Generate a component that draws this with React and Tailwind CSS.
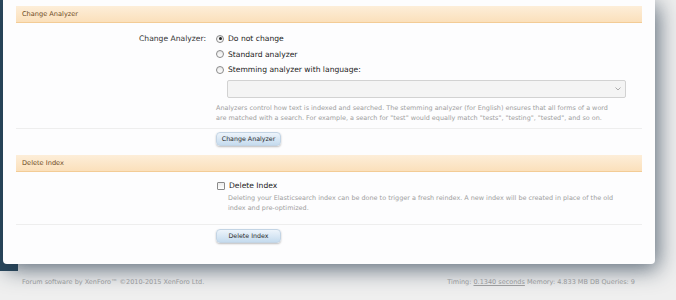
import React from "react";

function Radio({ checked }) {
  return (
    <span className="relative inline-block w-[8px] h-[8px] rounded-full border border-[#8a8a8a] bg-gradient-to-b from-[#e8e8e8] to-white shrink-0">
      {checked && (
        <span className="absolute left-[1.5px] top-[1.5px] w-[3px] h-[3px] rounded-full bg-[#222]" />
      )}
    </span>
  );
}

function Button({ children }) {
  return (
    <div className="w-[65px] h-[14px] rounded-[4px] border border-[#c3d4e4] bg-gradient-to-b from-[#edf4fb] to-[#c5dbee] shadow-[0_1px_2px_rgba(0,0,0,0.25)] flex items-center justify-center text-[6.3px] text-[#2a2a2a]">
      {children}
    </div>
  );
}

function Header({ children }) {
  return (
    <div className="h-[17px] bg-gradient-to-b from-[#fdeed9] to-[#fbe0bb] border-b border-[#f3cc96] flex items-center px-[6px] pt-[2px] text-[6.6px] text-[#6d4a1e]">
      {children}
    </div>
  );
}

export default function App() {
  return (
    <div
      className="relative w-[676px] h-[300px] overflow-hidden bg-[#efefef]"
      style={{ fontFamily: '"DejaVu Sans", Verdana, sans-serif' }}
    >
      <div className="absolute left-0 top-0 w-[18px] h-[271px] bg-[#2b495e]" />
      <div className="relative ml-[3px] w-[652px] h-[264px] bg-[#fdfdfe] rounded-b-[4px] shadow-[3px_5px_22px_rgba(30,50,70,0.7)] pt-[6px] px-[13px]">
        <Header>Change Analyzer</Header>
        <div className="flex pt-[11px]">
          <div className="w-[190px] text-right text-[7.6px] text-[#333] leading-[9px]">Change Analyzer:</div>
          <div className="ml-[10px] flex-1 pr-[16px]">
            <div className="flex flex-col gap-[6.5px] text-[7.6px] text-[#222] leading-[9px]">
              <div className="flex items-center gap-[4px]"><Radio checked /> Do not change</div>
              <div className="flex items-center gap-[4px]"><Radio /> Standard analyzer</div>
              <div className="flex items-center gap-[4px]"><Radio /> Stemming analyzer with language:</div>
            </div>
            <div className="ml-[11px] mt-[6px] h-[18px] border border-[#d2d2d2] rounded-[2px] bg-[#f4f4f4] flex items-center justify-end pr-[4px]">
              <svg width="6" height="4" viewBox="0 0 6 4" className="text-[#999]">
                <path d="M0.5 0.5 L3 3 L5.5 0.5" fill="none" stroke="currentColor" strokeWidth="0.8" />
              </svg>
            </div>
            <div className="mt-[5px] text-[6.45px] leading-[10px] text-[#a0a0a0] whitespace-nowrap">
              Analyzers control how text is indexed and searched. The stemming analyzer (for English) ensures that all forms of a word
              <br />
              are matched with a search. For example, a search for "test" would equally match "tests", "testing", "tested", and so on.
            </div>
          </div>
        </div>
        <div className="mt-[5px] border-t border-[#eeeeee] pt-[3px] pl-[200px]">
          <Button>Change Analyzer</Button>
        </div>
        <div className="mt-[9px]">
          <Header>Delete Index</Header>
        </div>
        <div className="pl-[201px] pt-[9px]">
          <div className="flex items-center gap-[4px] text-[7.6px] text-[#222] leading-[10px]">
            <span className="inline-block w-[8px] h-[8px] border border-[#8a8a8a] rounded-[1px] bg-gradient-to-b from-[#ececec] to-white" />
            Delete Index
          </div>
          <div className="ml-[11px] mt-[2px] text-[6.45px] leading-[10px] text-[#a0a0a0] whitespace-nowrap">
            Deleting your Elasticsearch index can be done to trigger a fresh reindex. A new index will be created in place of the old
            <br />
            index and pre-optimized.
          </div>
        </div>
        <div className="mt-[11px] border-t border-[#eeeeee] pt-[4px] pl-[200px]">
          <Button>Delete Index</Button>
        </div>
      </div>
      <div className="flex justify-between pl-[22px] pr-[41px] pt-[14px] text-[6.5px] text-[#a3a3a3]">
        <div>Forum software by XenForo™ ©2010-2015 XenForo Ltd.</div>
        <div>
          Timing: <span className="underline">0.1340 seconds</span> Memory: 4.833 MB DB Queries: 9
        </div>
      </div>
    </div>
  );
}
